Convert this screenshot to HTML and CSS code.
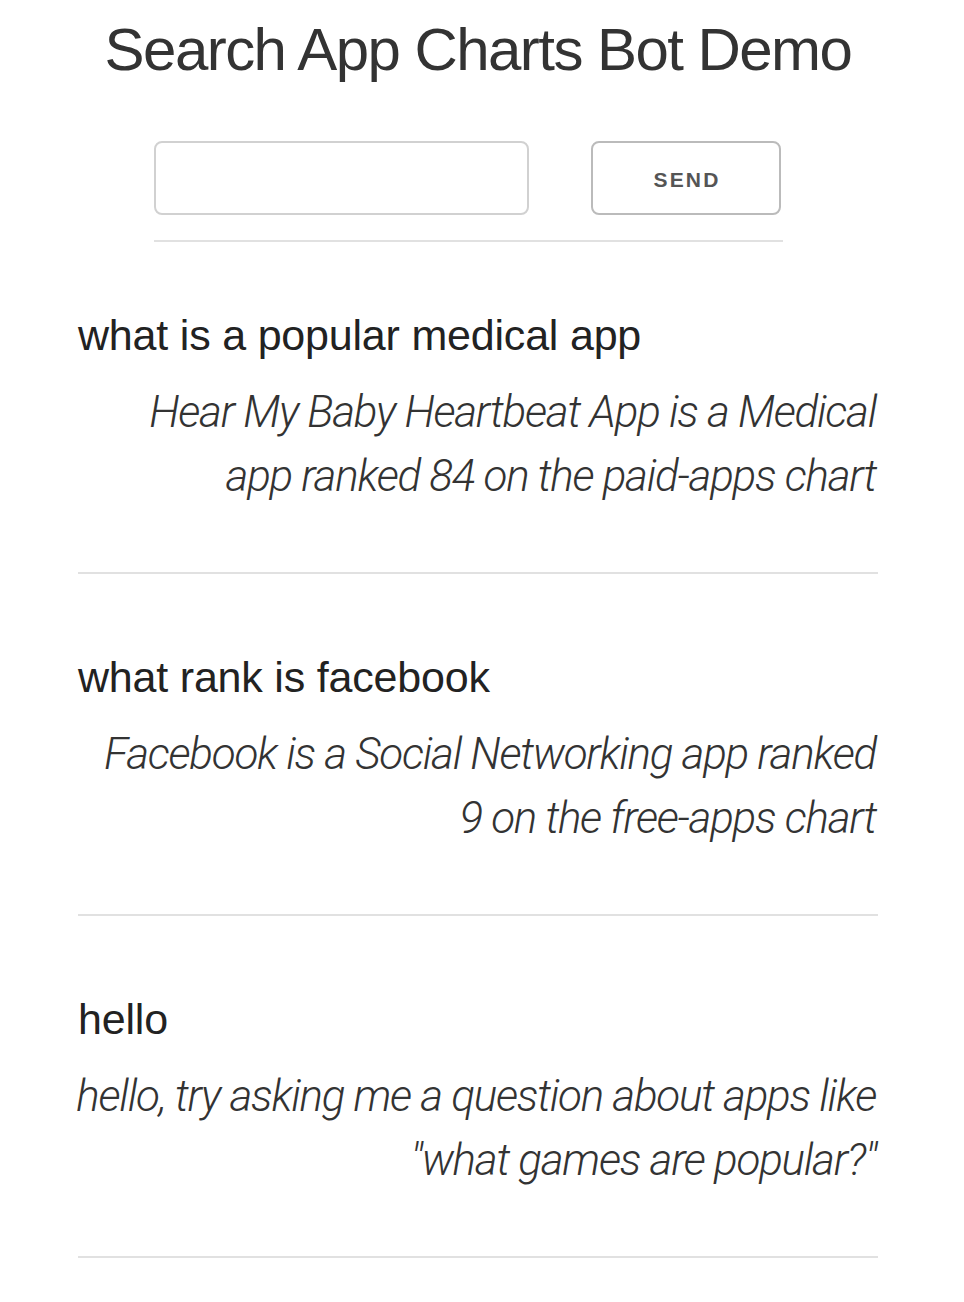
FILE: index.html
```html
<!DOCTYPE html>
<html lang="en">
<head>
<meta charset="utf-8">
<title>Search App Charts Bot Demo</title>
<link rel="stylesheet" href="styles.css">
</head>
<body>
<main class="page">
  <h1 class="title">Search App Charts Bot Demo</h1>
  <form class="ask">
    <div class="ask-row">
      <input class="ask-input" type="text" aria-label="Question">
      <button class="ask-button" type="button">Send</button>
    </div>
    <hr class="rule">
  </form>
  <section class="messages">
    <article class="msg">
      <h4 class="msg-q">what is a popular medical app</h4>
      <p class="msg-a">Hear My Baby Heartbeat App is a Medical<br>app ranked 84 on the paid-apps chart</p>
      <hr class="rule">
    </article>
    <article class="msg">
      <h4 class="msg-q">what rank is facebook</h4>
      <p class="msg-a">Facebook is a Social Networking app ranked<br>9 on the free-apps chart</p>
      <hr class="rule">
    </article>
    <article class="msg">
      <h4 class="msg-q">hello</h4>
      <p class="msg-a">hello, try asking me a question about apps like<br>"what games are popular?"</p>
      <hr class="rule">
    </article>
  </section>
</main>
</body>
</html>
```
FILE: styles.css
```css
* { box-sizing: border-box; }

html, body {
  margin: 0;
  padding: 0;
  background: #fff;
}

body {
  font-family: "Liberation Sans", Arial, sans-serif;
  color: #222;
}

.page {
  width: 800px;
  margin-left: 78px;
}

.title {
  margin: 14px 0 0;
  font-size: 60px;
  line-height: 72px;
  font-weight: 400;
  letter-spacing: -1.55px;
  color: #333;
  text-align: center;
}

.ask {
  width: 629px;
  margin: 55px 0 0 76px;
}

.ask-row {
  display: flex;
  align-items: stretch;
  gap: 62px;
}

.ask-input {
  width: 375px;
  height: 74px;
  margin: 0;
  border: 2px solid #d1d1d1;
  border-radius: 8px;
  background: #fff;
  padding: 0 16px;
  font: inherit;
  font-size: 28px;
  outline: none;
}

.ask-button {
  width: 190px;
  height: 74px;
  margin: 0;
  border: 2px solid #bbb;
  border-radius: 8px;
  background: #fff;
  color: #555;
  font-family: "Liberation Sans", Arial, sans-serif;
  font-weight: 700;
  font-size: 21px;
  letter-spacing: 2.2px;
  text-transform: uppercase;
  padding: 4px 0 0 2px;
  cursor: pointer;
}

.rule {
  margin: 0;
  border: 0;
  border-top: 2px solid #e1e1e1;
  height: 0;
}

.ask .rule {
  margin-top: 25px;
}

.msg {
  padding-top: 77px;
}

.msg:first-child {
  padding-top: 67px;
}

.msg-q {
  margin: 0;
  font-family: "Liberation Sans", Arial, sans-serif;
  font-size: 43px;
  line-height: 52px;
  font-weight: 400;
  letter-spacing: -0.2px;
  color: #222;
}

.msg-a {
  margin: 19px 0 0 -40px;
  font-family: Roboto, "Liberation Sans", sans-serif;
  font-style: italic;
  font-weight: 300;
  font-size: 44px;
  line-height: 64px;
  letter-spacing: -1.25px;
  color: #333;
  text-align: right;
  padding-right: 2px;
}

.msg .rule {
  margin-top: 64px;
}
```
